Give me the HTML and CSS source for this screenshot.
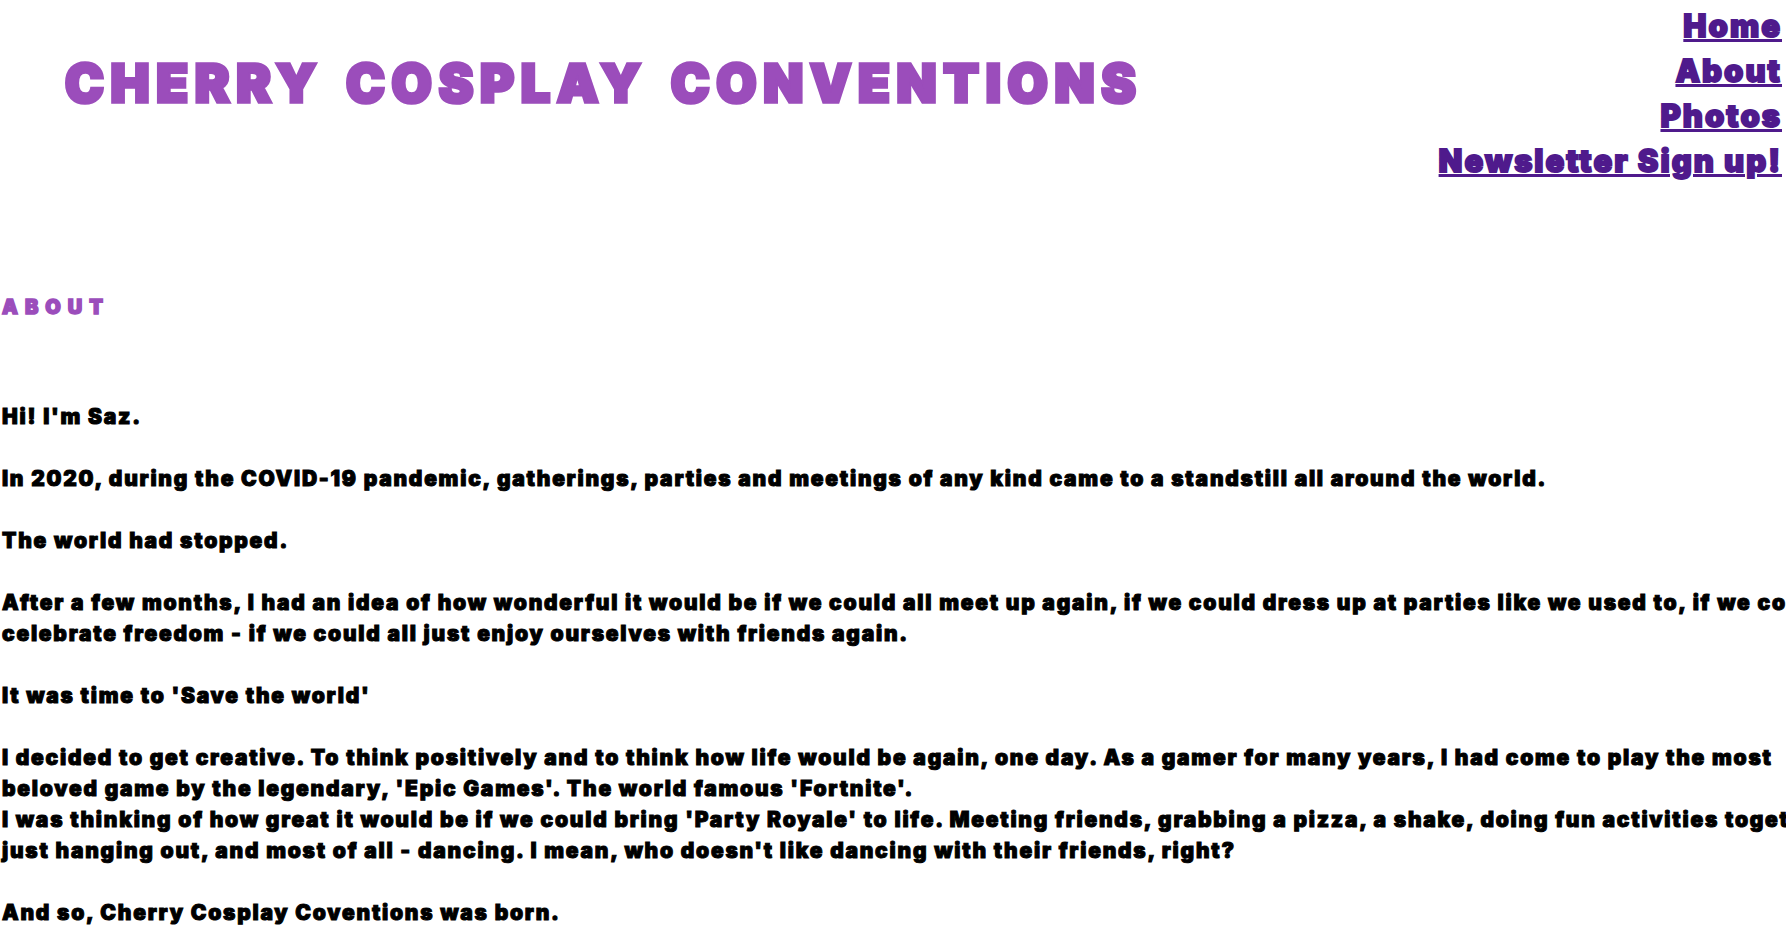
FILE: index.html
```html
<!DOCTYPE html>
<html lang="en">
<head>
<meta charset="utf-8">
<title>About</title>
<link rel="stylesheet" href="styles.css">
</head>
<body>
<header class="top">
<h1 class="brand">CHERRY COSPLAY CONVENTIONS</h1>
<nav class="nav">
<a href="#">Home</a>
<a href="#">About</a>
<a href="#">Photos</a>
<a href="#">Newsletter Sign up!</a>
</nav>
</header>
<main class="content">
<h2 class="section">ABOUT</h2>
<p>Hi! I'm Saz.</p>
<p>In 2020, during the COVID-19 pandemic, gatherings, parties and meetings of any kind came to a standstill all around the world.</p>
<p>The world had stopped.</p>
<p>After a few months, I had an idea of how wonderful it would be if we could all meet up again, if we could dress up at parties like we used to, if we could<br>celebrate freedom - if we could all just enjoy ourselves with friends again.</p>
<p>It was time to 'Save the world'</p>
<p>I decided to get creative. To think positively and to think how life would be again, one day. As a gamer for many years, I had come to play the most<br>beloved game by the legendary, 'Epic Games'. The world famous 'Fortnite'.<br>I was thinking of how great it would be if we could bring 'Party Royale' to life. Meeting friends, grabbing a pizza, a shake, doing fun activities together,<br>just hanging out, and most of all - dancing. I mean, who doesn't like dancing with their friends, right?</p>
<p>And so, Cherry Cosplay Coventions was born.</p>
</main>
</body>
</html>
```
FILE: styles.css
```css
html, body { margin: 0; padding: 0; background: #fff; overflow: hidden; height: 925px; }
body { width: 1786px; font-family: Inter, "DejaVu Sans", sans-serif; color: #000; }
.top { display: flex; justify-content: space-between; align-items: flex-start; height: 260px; }
.brand { margin: 54px 0 0 65px; font-size: 52px; line-height: 60px; letter-spacing: 6.7px; word-spacing: 6px; font-weight: 900; color: #9b4dbb; -webkit-text-stroke: 3.5px #9b4dbb; paint-order: stroke fill; }
.nav { display: flex; flex-direction: column; align-items: flex-end; padding: 3px 4px 0 0; font-size: 31px; line-height: 45px; font-weight: 900; letter-spacing: 2px; }
.nav a { color: #4f1a8c; -webkit-text-stroke: 1.8px #4f1a8c; paint-order: stroke fill; }
.section { margin: 34px 0 0 2px; font-size: 20px; line-height: 26px; letter-spacing: 7px; font-weight: 900; color: #9b4dbb; -webkit-text-stroke: 1.5px #9b4dbb; paint-order: stroke fill; }
.content { white-space: nowrap; }
.content p { margin: 31px 0 0 2px; font-size: 21px; line-height: 31px; font-weight: 900; letter-spacing: 1.75px; -webkit-text-stroke: 1px #000; }
.section + p { margin-top: 81px; }
```
